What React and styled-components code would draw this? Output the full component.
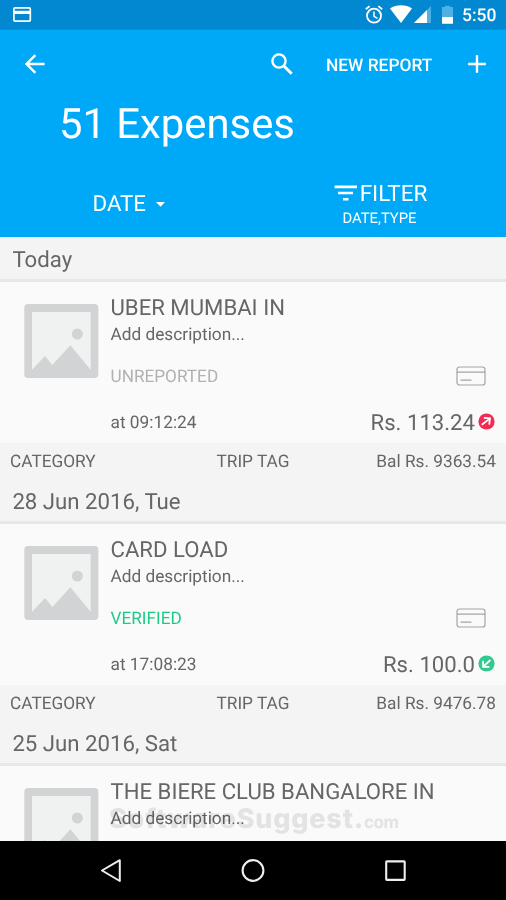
import React from "react";
import styled, { createGlobalStyle } from "styled-components";

const GlobalStyle = createGlobalStyle`
  *, *::before, *::after { box-sizing: border-box; }
  html, body { margin: 0; padding: 0; background: #000; }
  body { font-family: Roboto, "Noto Sans", sans-serif; color: #666; overflow: hidden; text-rendering: geometricPrecision; }
  button { text-rendering: inherit; }
  svg { display: block; flex: none; }
`;

const Screen = styled.div`
  width: 506px;
  height: 900px;
  display: flex;
  flex-direction: column;
  overflow: hidden;
  background: #f4f4f4;
`;

const StatusBar = styled.div`
  height: 30px;
  flex: none;
  display: flex;
  align-items: center;
  justify-content: space-between;
  padding: 0 10px 0 13px;
  background: #0288d1;
  border-bottom: 1px solid #0291df;
`;

const StatusIcons = styled.div`
  display: flex;
  align-items: center;
`;

const AlarmSlot = styled.span`
  margin-right: 7px;
`;

const Clock = styled.span`
  width: 34px;
  margin-left: 8px;
  font-size: 17.5px;
  font-weight: 500;
  line-height: 27px;
  padding-top: 4px;
  color: #fff;
  white-space: nowrap;
`;

const Header = styled.header`
  height: 207px;
  flex: none;
  display: flex;
  flex-direction: column;
  background: #00a9f7;
  color: #fff;
`;

const Toolbar = styled.div`
  height: 68px;
  display: flex;
  align-items: center;
  justify-content: space-between;
  padding: 0 19.5px 0 23px;
`;

const ToolbarActions = styled.div`
  display: flex;
  align-items: center;
`;

const ToolButton = styled.button`
  border: 0;
  padding: 0;
  background: none;
  color: inherit;
  display: flex;
`;

const NewReport = styled.button`
  border: 0;
  padding: 3px 0 0;
  width: 108px;
  margin: 0 32.5px 0 32.5px;
  background: none;
  color: #fff;
  font: 500 17.35px/24px Roboto, sans-serif;
  white-space: nowrap;
  text-align: left;
`;

const Title = styled.h1`
  margin: 2px 0 0 59px;
  font-size: 41.8px;
  font-weight: 400;
  line-height: 50px;
`;

const Controls = styled.div`
  flex: 1;
  display: grid;
  grid-template-columns: 1fr 1fr;
  padding-top: 30px;
`;

const SortControl = styled.div`
  display: flex;
  align-items: center;
  height: 48px;
  padding-left: 92.5px;
  gap: 10px;
  font-size: 22.3px;
`;

const FilterControl = styled.div`
  display: flex;
  flex-direction: column;
  align-items: center;
  padding: 1px 0 0 2px;
`;

const FilterLabel = styled.div`
  display: flex;
  align-items: center;
  gap: 3px;
  height: 26px;
  font-size: 22.5px;
  line-height: 26px;
`;

const FilterDetail = styled.div`
  padding-right: 2px;
  font-size: 14.8px;
  line-height: 22px;
`;

const List = styled.main`
  flex: 1;
  min-height: 0;
  overflow: hidden;
  position: relative;
`;

const SectionHeader = styled.h2`
  margin: 0;
  height: 45px;
  padding: 2px 0 0 12.4px;
  border-bottom: 3px solid #e7e7e7;
  font-size: 22.2px;
  font-weight: 400;
  line-height: 43px;
  color: #666;
`;

const Card = styled.article`
  height: 161px;
  display: flex;
  padding: 13px 11px 0 24px;
  background: #fafafa;
`;

const Thumb = styled.div`
  width: 86.5px;
  flex: none;
  padding-top: 9px;
`;

const CardBody = styled.div`
  flex: 1;
  min-width: 0;
  display: flex;
  flex-direction: column;
`;

const Merchant = styled.div`
  font-size: 22.15px;
  line-height: 26px;
  white-space: nowrap;
`;

const Description = styled.div`
  margin-top: 3px;
  font-size: 17.25px;
  line-height: 22px;
`;

const StateRow = styled.div`
  display: flex;
  justify-content: space-between;
  align-items: center;
  height: 22px;
  margin-top: 20px;
  padding-right: 9px;

  svg { margin-bottom: 2px; }
`;

const State = styled.span`
  font-size: 17.2px;
  line-height: 22px;
  color: ${(p) => (p.$verified ? "#1dcb86" : "#b1b1b1")};
`;

const AmountRow = styled.div`
  display: flex;
  justify-content: space-between;
  align-items: center;
  height: 26px;
  margin-top: 22px;
`;

const Time = styled.span`
  font-size: 17.3px;
  line-height: 22px;
`;

const Amount = styled.span`
  display: flex;
  align-items: center;
  gap: 3px;
  font-size: 22.15px;
  line-height: 26px;

  svg { margin-bottom: 4px; }
`;

const CardFooter = styled.footer`
  height: 36px;
  display: grid;
  grid-template-columns: 1fr auto 1fr;
  padding: 1px 10px 0;
  font-size: 17.25px;
  line-height: 36px;

  & > :last-child { text-align: right; }
`;

const Watermark = styled.div`
  position: absolute;
  left: 109px;
  top: 564px;
  display: flex;
  align-items: baseline;
  font: 800 27px/36px Inter, sans-serif;
  letter-spacing: 0.8px;
  color: #e8e8e8;
  mix-blend-mode: multiply;
  pointer-events: none;

  small { font-size: 17px; font-weight: 700; letter-spacing: -0.5px; }
`;

const NavBar = styled.nav`
  height: 59px;
  flex: none;
  display: flex;
  align-items: center;
  justify-content: space-between;
  padding: 0 99px;
  background: #000;
`;

const CardStatusIcon = () => (
  <svg width="19" height="15" viewBox="0 0 19 15" fill="none" stroke="#fff">
    <rect x="0.9" y="0.9" width="16.4" height="13.2" rx="1.2" strokeWidth="1.7" />
    <path d="M1 5.4h16.4" strokeWidth="3.2" />
  </svg>
);

const AlarmIcon = () => (
  <svg width="18" height="19" viewBox="0 0 18 19" fill="none" stroke="#fff">
    <circle cx="9" cy="10.7" r="7" strokeWidth="1.8" />
    <path d="M9 6.5v4.8l3.4 2" strokeWidth="1.5" />
    <path d="M.8 4.3 4.6 1.1M13.4 1.1l3.8 3.2" strokeWidth="1.8" />
  </svg>
);

const SignalIcons = () => (
  <svg width="64" height="20" viewBox="0 0 64 20">
    <path d="M0 3.5C6-.8 16-.8 22 3.5L11 18Z" fill="#fff" />
    <path d="M41 1v17H24Z" fill="#4fb0e3" />
    <path d="M37 5v13H24Z" fill="#fff" />
    <path d="M52 2h3V.8h5V2h3v16.7H52Z" fill="#4fb0e3" />
    <path d="M52 12h11v6.7H52Z" fill="#fff" />
  </svg>
);

const BackIcon = () => (
  <svg width="24" height="24" viewBox="0 0 24 24" fill="none" stroke="#fff" strokeWidth="2.4">
    <path d="M21.6 12H4M12.4 3.1 3.5 12l8.9 8.9" />
  </svg>
);

const SearchIcon = () => (
  <svg width="24" height="24" viewBox="0 0 24 24" fill="none" stroke="#fff">
    <circle cx="9" cy="9" r="6.6" strokeWidth="2.4" />
    <path d="m13.7 13.7 8 8" strokeWidth="3" />
  </svg>
);

const PlusIcon = () => (
  <svg width="20" height="20" viewBox="0 0 20 20" stroke="#fff" strokeWidth="2.4">
    <path d="M10 1.2v17.6M1.2 10h17.6" />
  </svg>
);

const CaretIcon = () => (
  <svg width="9" height="5" viewBox="0 0 9 5">
    <path d="M0 0h9L4.5 4.7Z" fill="#fff" />
  </svg>
);

const FilterIcon = () => (
  <svg width="23" height="18" viewBox="0 0 23 18" fill="#fff">
    <path d="M.5.5H23v2.7H.5ZM4 6.8h15v2.5H4ZM9 13h5.5v2.5H9Z" />
  </svg>
);

const ImagePlaceholder = () => (
  <svg width="75" height="75" viewBox="-1 0 225 225">
    <rect x="0" y="0" width="222" height="222" rx="11" fill="#d1d3d4" />
    <path d="M23 24h176v174H23Z" fill="#f0f2f1" />
    <circle cx="159" cy="90" r="16.5" fill="#d1d3d4" />
    <path d="M22 199 62 156l22 27 54-59 62 75Z" fill="#d1d3d4" />
  </svg>
);

const PaymentCardIcon = () => (
  <svg width="30" height="20" viewBox="0 0 30 20" fill="none" stroke="#a4a4a4" strokeWidth="1.2">
    <rect x="1" y="1" width="28" height="18" rx="2.6" />
    <path d="M1 6.1h28M4.5 14.2h11" />
  </svg>
);

const DirectionIcon = ({ incoming }) => (
  <svg width="17" height="17" viewBox="0 0 17 17">
    <circle cx="8.5" cy="8.5" r="8.1" fill={incoming ? "#2fca8d" : "#f32b52"} />
    <path
      d={incoming ? "M12.4 5 5.6 11.3M5.1 5.8v6h6.3" : "M3.8 11.7 11.7 5.6M5.8 4.8l6.2.5-.8 6.4"}
      fill="none"
      stroke="#fff"
      strokeWidth="1.8"
    />
  </svg>
);

const NavBackIcon = () => (
  <svg width="24" height="24" viewBox="0 0 24 24" fill="none" stroke="#eee" strokeWidth="2">
    <path d="M20.8 1.2v20.8L3 11.5Z" strokeLinejoin="round" />
  </svg>
);

const NavHomeIcon = () => (
  <svg width="24" height="24" viewBox="0 0 24 24" fill="none" stroke="#eee" strokeWidth="2.1">
    <circle cx="12" cy="11.5" r="10.4" />
  </svg>
);

const NavRecentIcon = () => (
  <svg width="24" height="24" viewBox="0 0 24 24" fill="none" stroke="#eee" strokeWidth="2.1">
    <rect x="3.2" y="2.4" width="18.5" height="18.5" rx="0.6" />
  </svg>
);

const expenses = [
  { date: "Today", merchant: "UBER MUMBAI IN", state: "UNREPORTED", time: "09:12:24", amount: "113.24", balance: "9363.54" },
  { date: "28 Jun 2016, Tue", merchant: "CARD LOAD", state: "VERIFIED", time: "17:08:23", amount: "100.0", balance: "9476.78", incoming: true },
  { date: "25 Jun 2016, Sat", merchant: "THE BIERE CLUB BANGALORE IN" },
];

const Expense = ({ item }) => (
  <section>
    <SectionHeader>{item.date}</SectionHeader>
    <Card>
      <Thumb><ImagePlaceholder /></Thumb>
      <CardBody>
        <Merchant>{item.merchant}</Merchant>
        <Description>Add description...</Description>
        {item.state && (
          <>
            <StateRow>
              <State $verified={item.incoming}>{item.state}</State>
              <PaymentCardIcon />
            </StateRow>
            <AmountRow>
              <Time>at {item.time}</Time>
              <Amount>Rs. {item.amount}<DirectionIcon incoming={item.incoming} /></Amount>
            </AmountRow>
          </>
        )}
      </CardBody>
    </Card>
    {item.balance && (
      <CardFooter>
        <span>CATEGORY</span>
        <span>TRIP TAG</span>
        <span>Bal Rs. {item.balance}</span>
      </CardFooter>
    )}
  </section>
);

export default function App() {
  return (
    <>
      <GlobalStyle />
      <Screen>
        <StatusBar>
          <CardStatusIcon />
          <StatusIcons>
            <AlarmSlot><AlarmIcon /></AlarmSlot>
            <SignalIcons />
            <Clock>5:50</Clock>
          </StatusIcons>
        </StatusBar>
        <Header>
          <Toolbar>
            <ToolButton aria-label="Back"><BackIcon /></ToolButton>
            <ToolbarActions>
              <ToolButton aria-label="Search"><SearchIcon /></ToolButton>
              <NewReport>NEW REPORT</NewReport>
              <ToolButton aria-label="Add"><PlusIcon /></ToolButton>
            </ToolbarActions>
          </Toolbar>
          <Title>51 Expenses</Title>
          <Controls>
            <SortControl>DATE<CaretIcon /></SortControl>
            <FilterControl>
              <FilterLabel><FilterIcon />FILTER</FilterLabel>
              <FilterDetail>DATE,TYPE</FilterDetail>
            </FilterControl>
          </Controls>
        </Header>
        <List>
          {expenses.map((item) => <Expense key={item.date} item={item} />)}
          <Watermark>SoftwareSuggest.<small>com</small></Watermark>
        </List>
        <NavBar>
          <NavBackIcon />
          <NavHomeIcon />
          <NavRecentIcon />
        </NavBar>
      </Screen>
    </>
  );
}
